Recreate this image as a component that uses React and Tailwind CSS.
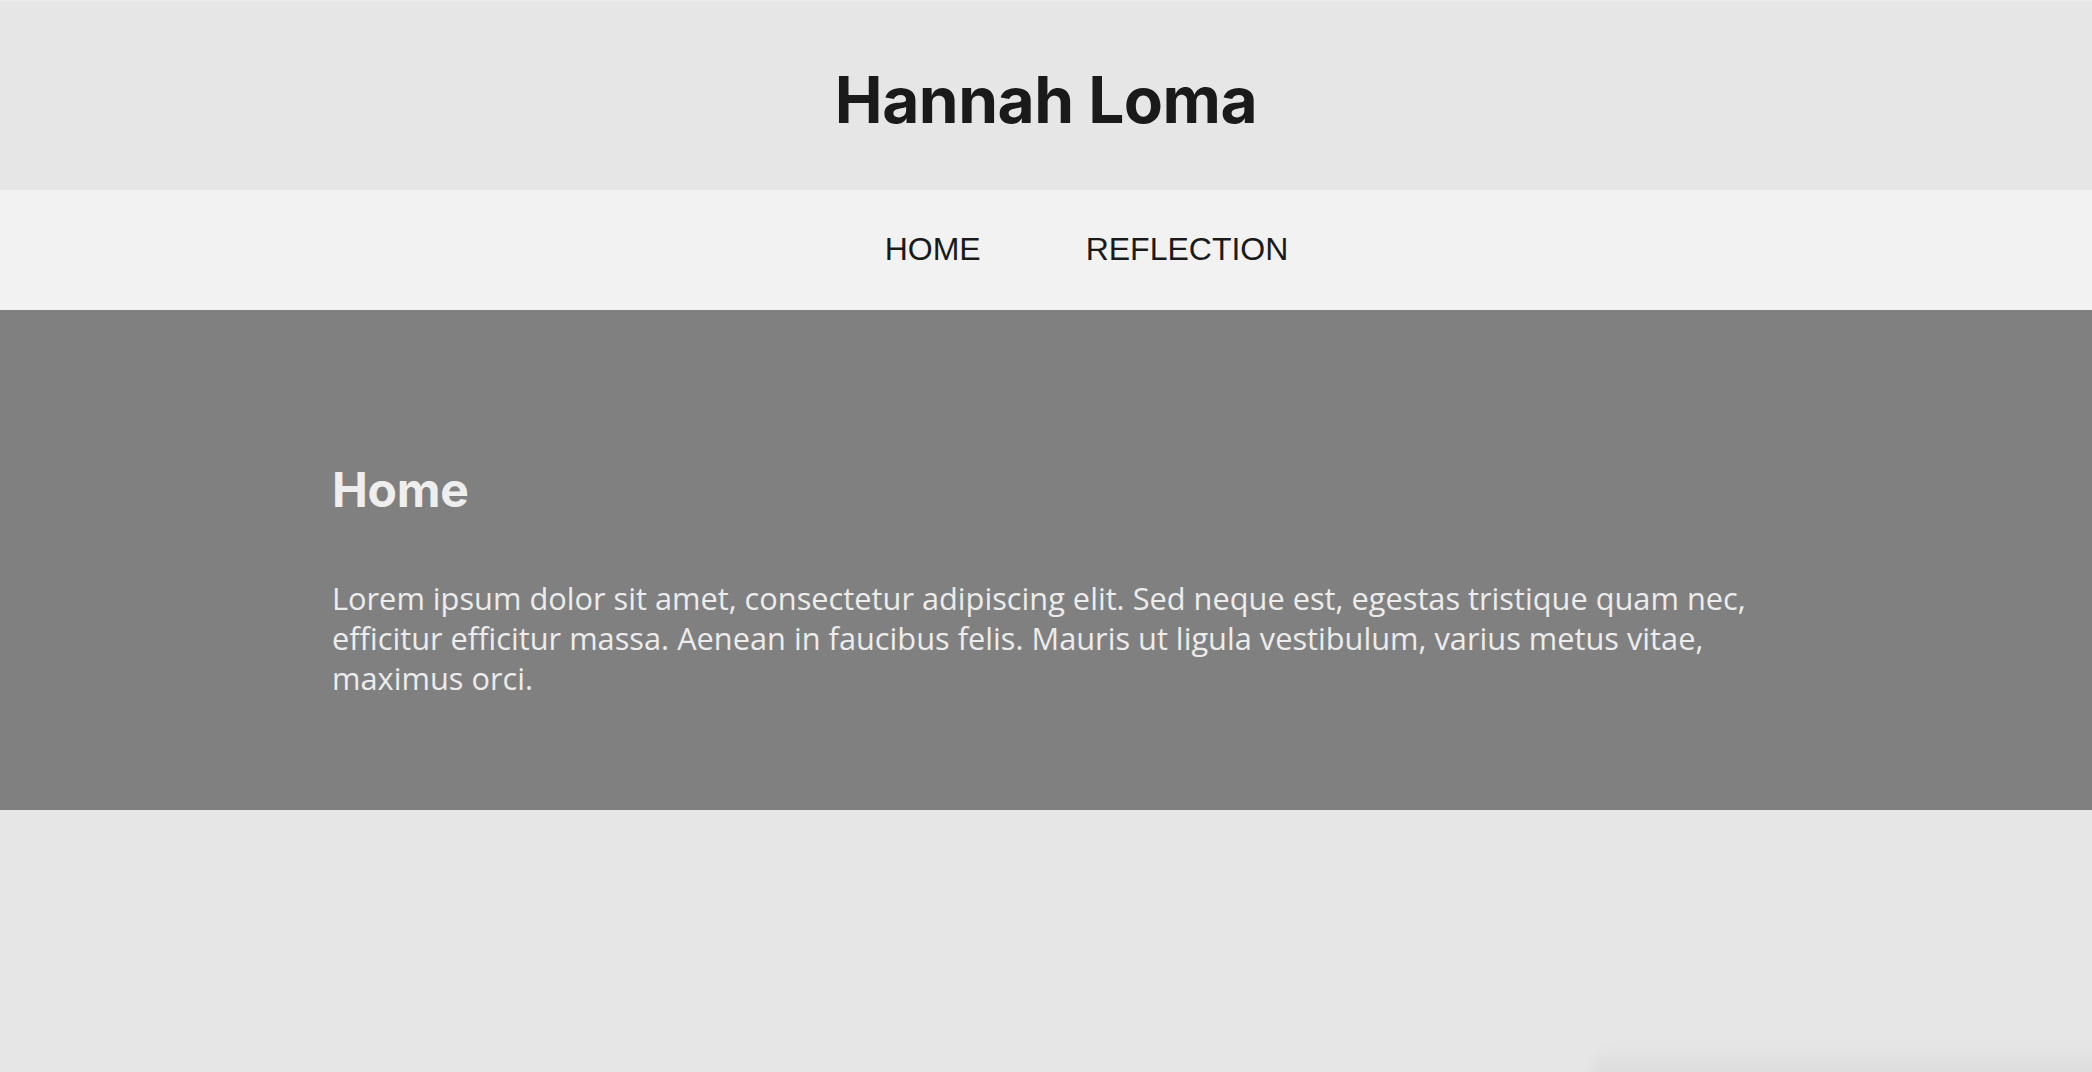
export default function App() {
  return (
    <div className="relative min-h-screen bg-[#e6e6e6] overflow-hidden">
      <header className="h-[190px] bg-[#e6e6e6] border-t-2 border-[#ebebeb] pt-[66px] text-center">
        <h1
          className="text-[64px] leading-[64px] font-bold text-[#1a1a1a] tracking-[-0.5px]"
          style={{ fontFamily: "Inter, 'Noto Sans', sans-serif" }}
        >
          Hannah Loma
        </h1>
      </header>
      <nav
        className="h-[120px] bg-[#f2f2f2] pt-[43px] pl-[81px] flex justify-center items-start gap-[105px] text-[32px] leading-[32px] text-[#1a1a1a]"
        style={{ fontFamily: "'Liberation Sans', Arial, sans-serif" }}
      >
        <a href="#">HOME</a>
        <a href="#">REFLECTION</a>
      </nav>
      <section className="h-[500px] bg-[#808080] pt-[156px]">
        <div className="w-[1428px] mx-auto">
          <h2
            className="text-[48px] leading-[48px] font-bold text-[#eeeeee] tracking-[-0.3px]"
            style={{ fontFamily: "Inter, 'Noto Sans', sans-serif" }}
          >
            Home
          </h2>
          <p
            className="mt-[64px] text-[30.75px] leading-[40px] text-[#ececec]"
            style={{ fontFamily: "'Open Sans', 'Noto Sans', sans-serif" }}
          >
            Lorem ipsum dolor sit amet, consectetur adipiscing elit. Sed neque est, egestas tristique quam nec, efficitur efficitur massa. Aenean in faucibus felis. Mauris ut ligula vestibulum, varius metus vitae, maximus orci.
          </p>
        </div>
      </section>
      <div className="absolute top-[1040px] left-[1590px] w-[560px] h-[60px] rounded-tl-[40px] bg-gradient-to-b from-transparent to-black/[0.06] blur-[6px]" />
    </div>
  );
}
